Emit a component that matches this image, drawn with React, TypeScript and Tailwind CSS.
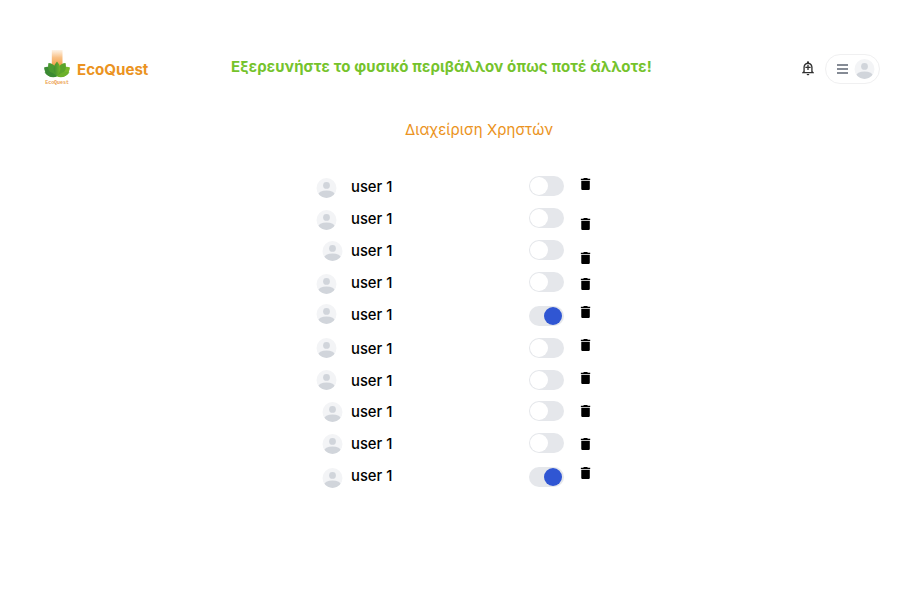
import React from 'react';

type Row = { on?: boolean; row: string; avatar: string; toggle: string; trash: string };

const rows: Row[] = [
  { row: 'h-8', avatar: 'mt-[7.7px]', toggle: 'mt-[6.4px]', trash: 'mt-[6px]' },
  { row: 'h-8', avatar: 'mt-[7.5px]', toggle: 'mt-[6.3px]', trash: 'mt-[14px]' },
  { row: 'h-8', avatar: 'mt-[7.3px] ml-[6px]', toggle: 'mt-[6px]', trash: 'mt-[16px]' },
  { row: 'h-8', avatar: 'mt-[7.5px]', toggle: 'mt-[6px]', trash: 'mt-[10px]' },
  { row: 'h-[34px]', avatar: 'mt-[5.7px]', toggle: 'mt-[7.7px]', trash: 'mt-[6px]' },
  { row: 'h-8', avatar: 'mt-[6.3px]', toggle: 'mt-[5.7px]', trash: 'mt-[5px]' },
  { row: 'h-[31.4px]', avatar: 'mt-[6.3px]', toggle: 'mt-[5.7px]', trash: 'mt-[6px]' },
  { row: 'h-8', avatar: 'mt-[7.1px] ml-[6px]', toggle: 'mt-[6.1px]', trash: 'mt-[7.6px]' },
  { row: 'h-8', avatar: 'mt-[7.1px] ml-[6px]', toggle: 'mt-[6.1px]', trash: 'mt-[8.2px]' },
  { row: 'h-8', avatar: 'mt-[8.6px] ml-[6px]', toggle: 'mt-[7.6px]', trash: 'mt-[5.6px]' },
];

function Avatar() {
  return (
    <svg className="block size-5 overflow-visible" viewBox="-0.5 0 20 20">
      <clipPath id="disc"><circle cx="10" cy="10" r="10" /></clipPath>
      <circle cx="10" cy="10" r="10" fill="#f3f4f6" />
      <g clipPath="url(#disc)" fill="#d1d5db">
        <circle cx="10" cy="7.4" r="3.4" />
        <ellipse cx="10" cy="17.2" rx="8.6" ry="4.8" />
      </g>
    </svg>
  );
}

function Toggle({ on }: { on?: boolean }) {
  return (
    <div className={`flex h-[20px] w-[34.6px] items-center rounded-full bg-[#e5e7eb] pr-[1.6px] pl-[1.2px] ${on ? 'justify-end' : 'justify-start'}`}>
      <div className={`size-[18px] rounded-full ${on ? 'bg-[#3056d3]' : 'bg-white'}`} />
    </div>
  );
}

function Logo() {
  return (
    <svg className="block h-[38px] w-[28px]" viewBox="0 0 28 38">
      <defs>
        <linearGradient id="glow" x1="0" y1="0" x2="0" y2="1">
          <stop offset="0" stopColor="#f9b469" stopOpacity="0.15" />
          <stop offset="0.45" stopColor="#f7b065" stopOpacity="0.8" />
          <stop offset="1" stopColor="#f39a3c" />
        </linearGradient>
        <linearGradient id="leaf" x1="0" y1="0" x2="1" y2="0">
          <stop offset="0" stopColor="#3f8d32" />
          <stop offset="1" stopColor="#72b52d" />
        </linearGradient>
      </defs>
      <rect x="8.8" y="1" width="10.7" height="17" fill="url(#glow)" />
      <path d="M1 18.5C8 16 12 21 14 27C6 30 2 25 1 18.5Z" fill="#3c8a35" />
      <path d="M27 18.5C20 16 16 21 14 27C22 30 26 25 27 18.5Z" fill="#78b82a" />
      <path d="M5.5 14C11 14 14 19 14 27C6 25 4 20 5.5 14Z" fill="#4a9a31" />
      <path d="M22.500 14C17 14 14 19 14 27C22 25 24 20 22.500 14Z" fill="#5aa42b" />
      <path d="M14 12.500Q20.500 19 14 27.500Q7.500 19 14 12.500Z" fill="url(#leaf)" />
      <path d="M1.500 23.500Q8 21 14 27.500Q7 30 1.500 23.500Z" fill="#3b8a33" />
      <path d="M26.500 23.500Q20 21 14 27.500Q21 30 26.500 23.500Z" fill="#6bb02a" />
      <text x="2.2" y="35.4" textLength="23.8" fontSize="5" fontWeight="700" fill="#ec9f50" fontFamily="Liberation Mono, monospace">EcoQuest</text>
    </svg>
  );
}

export default function App() {
  return (
    <div className="h-[593px] w-[921px] overflow-hidden bg-white font-['Inter','Noto_Sans',sans-serif]">
      <header className="flex h-[110px] items-start pl-[43px]">
        <div className="mt-[49px] shrink-0"><Logo /></div>
        <div className="mt-[58px] ml-[6px] w-[154px] shrink-0 text-[15.1px] leading-6 font-bold whitespace-nowrap text-[#eb9321]">EcoQuest</div>
        <h1 className="mt-[55px] w-[569px] shrink-0 text-[15px] leading-6 font-bold tracking-[0.13px] whitespace-nowrap text-[#75c32c]">Εξερευνήστε το φυσικό περιβάλλον όπως ποτέ άλλοτε!</h1>
        <svg className="mt-[60px] block size-[16px] shrink-0" viewBox="0 0 24 24" fill="#303030">
          <path d="M10.01 21.01c0 1.1.89 1.99 1.99 1.99s1.99-.89 1.99-1.99h-3.98zm8.87-4.19V11c0-3.25-2.25-5.97-5.29-6.69v-.72C13.59 2.71 12.88 2 12 2s-1.59.71-1.59 1.59v.72C7.37 5.03 5.12 7.75 5.12 11v5.82L3 18.94V20h18v-1.06l-2.12-2.12zM16.88 18H7.12v-7c0-2.76 2.12-4.94 4.88-4.94S16.88 8.24 16.88 11v7zM16 12.01h-3V15h-2v-2.99H8V10h3V7h2v3h3v2.01z" />
        </svg>
        <div className="mt-[54px] ml-[9px] flex h-[30px] w-[55px] shrink-0 items-center rounded-full border border-[#f0f0f1] pl-[11px]">
          <div className="flex w-[11px] flex-col gap-[2.5px]">
            <div className="h-[1.5px] bg-[#858b95]" />
            <div className="h-[1.5px] bg-[#858b95]" />
            <div className="h-[1.5px] bg-[#858b95]" />
          </div>
          <div className="ml-[6px]"><Avatar /></div>
        </div>
      </header>
      <h2 className="ml-[405px] h-[60px] pt-[8px] text-[15px] leading-6 font-normal tracking-[0.08px] whitespace-nowrap text-[#eb9321]">Διαχείριση Χρηστών</h2>
      <main className="ml-[316px]">
        {rows.map((r, i) => (
          <div key={i} className={`flex items-start ${r.row}`}>
            <div className="w-[35px]"><div className={r.avatar}><Avatar /></div></div>
            <div className="mt-[5px] w-[178px] text-[14.8px] leading-6 font-medium text-black">user 1</div>
            <div className={`w-[48px] ${r.toggle}`}><Toggle on={i === 4 || i === 9} /></div>
            <svg className={`block size-4 overflow-visible ${r.trash}`} viewBox="-0.8 0 24 24" fill="#000">
              <path d="M5.6 19c0 1.1.9 2 2 2h8.800c1.100 0 2-.9 2-2V7H5.600v12zM19 4h-3.500l-1-1h-5l-1 1H5v2h14V4z" />
            </svg>
          </div>
        ))}
      </main>
    </div>
  );
}
